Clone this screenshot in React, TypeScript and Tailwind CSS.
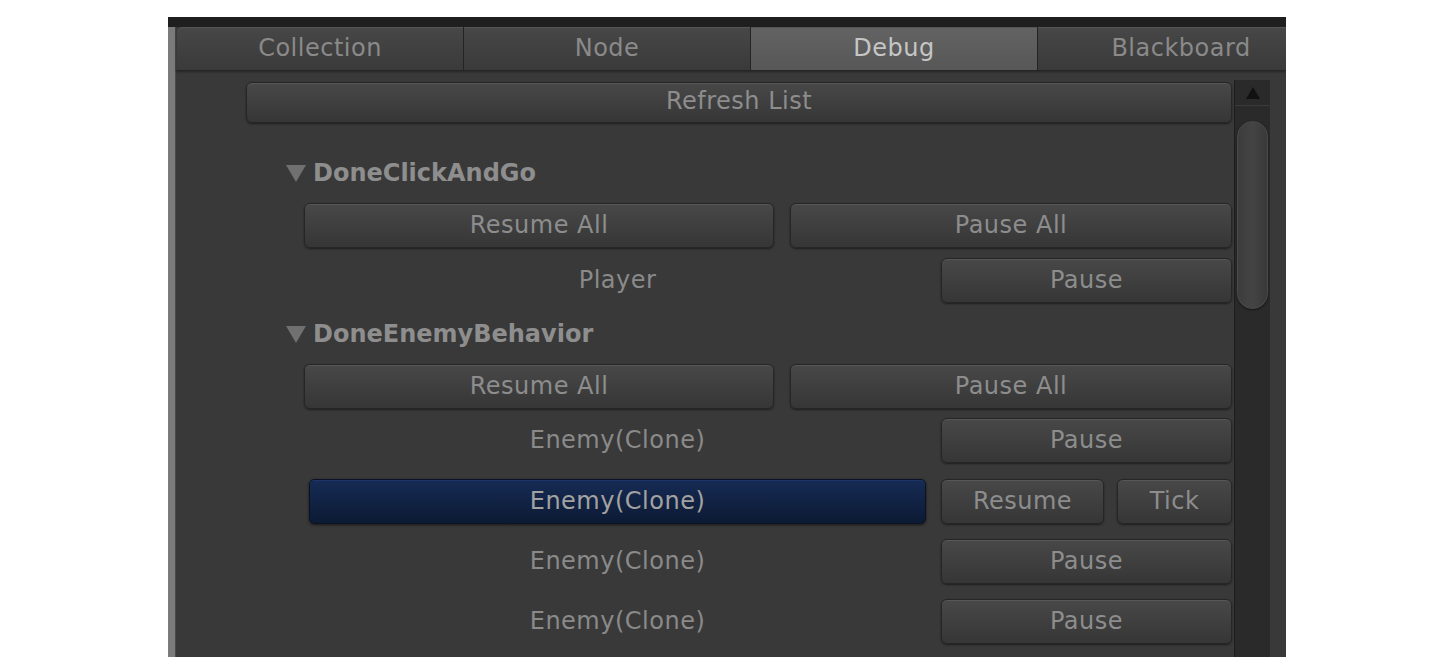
import React from "react";

const font = { fontFamily: '"DejaVu Sans", "Liberation Sans", sans-serif' };

// shared look of the Unity-style dark buttons (height is set by each caller)
const btn =
  "flex items-center justify-center pb-[1px] rounded-[6px] border border-[#262626] bg-gradient-to-b from-[#484848] to-[#363636] shadow-[inset_0_1px_0_#575757,0_1px_2px_rgba(0,0,0,0.5)] text-[#8d8d8d] text-[24px] tracking-[0.5px]";

const Tab = ({ label, active, first }: { label: string; active?: boolean; first?: boolean }) => (
  <div
    className={`w-[287px] shrink-0 h-full flex items-center justify-center pb-[1px] text-[24px] tracking-[0.5px] border-r border-[#242424] shadow-[inset_0_1px_0_#555] ${
      active
        ? "bg-gradient-to-b from-[#636363] to-[#575757] text-[#c6c6c6]"
        : "bg-gradient-to-b from-[#474747] to-[#3a3a3a] text-[#8a8a8a]"
    } ${first ? "rounded-l-[6px]" : ""}`}
  >
    {label}
  </div>
);

const Header = ({ title, mt }: { title: string; mt: string }) => (
  <div className={`${mt} h-[30px] flex items-center pl-[109px]`}>
    <svg width="22" height="20" viewBox="0 0 22 20" className="mr-[6px]">
      <polygon points="1,2 21,2 11,19" fill="#707070" />
    </svg>
    <span className="font-bold text-[24px] text-[#8e8e8e]">{title}</span>
  </div>
);

const AllRow = ({ mt }: { mt: string }) => (
  <div className={`${mt} flex gap-[16px] pl-[128px]`}>
    <div className={`${btn} h-[45px] w-[470px]`}>Resume All</div>
    <div className={`${btn} h-[45px] flex-1`}>Pause All</div>
  </div>
);

const ItemRow = ({ name, mt, selected }: { name: string; mt: string; selected?: boolean }) => (
  <div className={`${mt} flex pl-[133px] h-[45px]`}>
    <div
      className={`w-[617px] flex items-center justify-center pb-[1px] text-[24px] tracking-[0.5px] rounded-[5px] ${
        selected
          ? "bg-gradient-to-b from-[#162b55] to-[#0c1a33] border border-[#0a1326] text-[#a2a2a2] shadow-[inset_0_1px_0_#1d3566,0_1px_3px_rgba(0,0,0,0.6)]"
          : "text-[#8a8a8a]"
      }`}
    >
      {name}
    </div>
    <div className="ml-[15px] flex-1 flex gap-[13px]">
      {selected ? (
        <>
          <div className={`${btn} h-[45px] w-[163px]`}>Resume</div>
          <div className={`${btn} h-[45px] flex-1`}>Tick</div>
        </>
      ) : (
        <div className={`${btn} h-[45px] flex-1`}>Pause</div>
      )}
    </div>
  </div>
);

export default function App() {
  return (
    <div className="w-[1456px] h-[672px] bg-white pt-[17px] pl-[168px]" style={font}>
      <div className="w-[1118px] h-[640px] bg-[#393939] flex flex-col overflow-hidden">
        <div className="h-[10px] bg-[#1f1f1f] shrink-0" />
        <div className="flex flex-1 min-h-0">
          <div className="w-[8px] bg-[#7b7b7b] border-r border-[#4a4a4a] shrink-0" />
          <div className="flex-1 flex flex-col min-w-0">
            <div className="h-[43px] flex pl-[1px] shrink-0 overflow-hidden shadow-[0_2px_2px_rgba(0,0,0,0.35)]">
              <Tab label="Collection" first />
              <Tab label="Node" />
              <Tab label="Debug" active />
              <Tab label="Blackboard" />
            </div>
            <div className="flex flex-1 min-h-0">
              <div className="flex-1 pr-[2px]">
                <div className={`${btn} h-[41px] mt-[12px] ml-[70px] pb-[3px]`}>Refresh List</div>
                <Header title="DoneClickAndGo" mt="mt-[35px]" />
                <AllRow mt="mt-[15px]" />
                <ItemRow name="Player" mt="mt-[10px]" />
                <Header title="DoneEnemyBehavior" mt="mt-[16px]" />
                <AllRow mt="mt-[15px]" />
                <ItemRow name="Enemy(Clone)" mt="mt-[9px]" />
                <ItemRow name="Enemy(Clone)" mt="mt-[16px]" selected />
                <ItemRow name="Enemy(Clone)" mt="mt-[15px]" />
                <ItemRow name="Enemy(Clone)" mt="mt-[15px]" />
              </div>
              <div className="w-[36px] mt-[10px] bg-[#2a2a2a] border-l border-[#1e1e1e] flex flex-col items-center shrink-0">
                <div className="h-[26px] w-full flex items-center justify-center border-b border-[#3a3a3a]">
                  <svg width="14" height="12" viewBox="0 0 14 12">
                    <polygon points="7,0 14,12 0,12" fill="#111" />
                  </svg>
                </div>
                <div className="mt-[15px] w-[31px] h-[188px] rounded-[16px] border border-[#4a4a4a] bg-gradient-to-r from-[#3c3c3c] via-[#444] to-[#393939] shadow-[0_1px_2px_rgba(0,0,0,0.5)]" />
              </div>
              <div className="w-[16px] shrink-0" />
            </div>
          </div>
        </div>
      </div>
    </div>
  );
}
